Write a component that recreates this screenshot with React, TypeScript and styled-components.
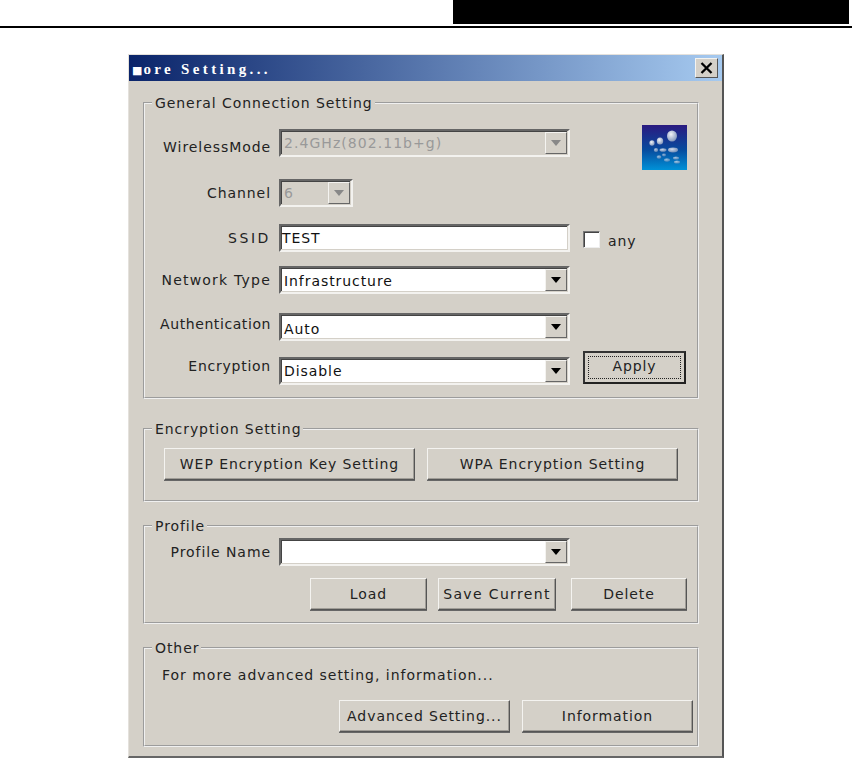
import React from 'react';
import styled, { createGlobalStyle } from 'styled-components';

const Global = createGlobalStyle`
  html, body { margin: 0; padding: 0; background: #fff; }
  body { width: 852px; height: 759px; overflow: hidden; font-family: "DejaVu Sans", Verdana, sans-serif; }
`;
const Header = styled.header`
  height: 28px; box-sizing: border-box; border-bottom: 2px solid #000;
  display: flex; justify-content: flex-end; padding-right: 3px;
`;
const BlackTab = styled.div`width: 396px; height: 24px; background: #000;`;
const Page = styled.main`display: flex; padding: 26px 0 0 128px;`;
const Win = styled.section`
  width: 596px; height: 704px; box-sizing: border-box; background: #d4d0c8;
  border-top: 1px solid #e4e1dc; border-right: 2px solid #555; border-bottom: 2px solid #666; border-left: 1px solid #e4e1dc;
  display: flex; flex-direction: column;
`;
const TitleBar = styled.div`
  height: 26px; flex: none; background: linear-gradient(90deg, #0a246a, #a6caf0);
  display: flex; align-items: center; justify-content: space-between; padding: 0 4px 0 3px;
`;
const Title = styled.div`
  color: #fff; font: bold 15px "Liberation Serif", serif; letter-spacing: 3.35px; white-space: pre; padding-top: 3px;
`;
const Block = styled.span`font: 11px "DejaVu Sans", sans-serif; letter-spacing: 1px;`;
const CloseBtn = styled.div`
  width: 23px; height: 20px; box-sizing: border-box; background: #d4d0c8;
  border: 1px solid; border-color: #f4f3f0 #555 #555 #f4f3f0;
  display: flex; align-items: center; justify-content: center;
`;
const Body = styled.div`padding: 12px 0 0 14px; display: flex; flex-direction: column;`;
const Group = styled.fieldset<{ $h: number; $mt?: number }>`
  margin: ${p => p.$mt ?? 0}px 0 0; padding: 0; min-width: 0; width: 556px; height: ${p => p.$h}px; box-sizing: border-box;
  border: 2px groove #f0f0f0; color: #111;
`;
const Legend = styled.legend`
  margin-left: 7px; padding: 2px 2px 0 3px; font-size: 14px; line-height: 17px; letter-spacing: 0.93px; color: #222;
`;
const Row = styled.div<{ $mt: number }>`display: flex; align-items: center; margin-top: ${p => p.$mt}px; position: relative;`;
const Label = styled.span<{ $up?: number; $down?: number; $ls?: number }>`
  width: 126px; flex: none; text-align: right; font-size: 14px; letter-spacing: ${p => p.$ls ?? 0.93}px; color: #222; white-space: nowrap;
  margin-right: 8px; padding-bottom: ${p => p.$up ?? 0}px; padding-top: ${p => p.$down ?? 0}px;
`;
const Field = styled.div<{ $w?: number; $dis?: boolean; $h?: number }>`
  width: ${p => p.$w ?? 291}px; height: ${p => p.$h ?? 28}px; box-sizing: border-box; flex: none;
  background: ${p => (p.$dis ? '#d4d0c8' : '#fff')};
  border: 2px solid; border-color: #666 #f3f2ef #f3f2ef #666;
  box-shadow: inset -1px -1px 0 #d4d0c8, inset 1px 1px 0 #444;
  display: flex; align-items: center; justify-content: space-between;
`;
const FieldText = styled.span<{ $dis?: boolean; $down?: number; $pl?: number }>`
  padding-left: ${p => p.$pl ?? 3}px; font-size: 14px; letter-spacing: ${p => (p.$dis ? 1.05 : 0.93)}px; color: ${p => (p.$dis ? '#999' : '#111')};
  padding-top: ${p => p.$down ?? 0}px; white-space: nowrap;
`;
const Arrow = styled.div<{ $dis?: boolean }>`
  width: 22px; height: 22px; margin-right: 1px; flex: none; box-sizing: border-box; background: #d4d0c8;
  border: 1px solid; border-color: #f4f3f0 #666 #666 #f4f3f0;
  display: flex; align-items: center; justify-content: center;
  &::after { content: ''; border: 5px solid transparent; border-top: 6px solid ${p => (p.$dis ? '#888' : '#000')}; border-bottom: 0; }
`;
const Check = styled.div`
  width: 17px; height: 17px; margin: 3px 0 0 13px; box-sizing: border-box; background: #fff;
  border: 1px solid; border-color: #777 #eee #eee #777; box-shadow: inset 1px 1px 0 #444;
`;
const CheckText = styled.span`margin-left: 8px; padding-top: 6px; font-size: 14px; letter-spacing: 0.93px; color: #222;`;
const Btn = styled.div<{ $w: number; $ml?: number; $ls?: number }>`
  width: ${p => p.$w}px; height: 32px; margin-left: ${p => p.$ml ?? 0}px; box-sizing: border-box; flex: none; background: #d4d0c8;
  border: 1px solid; border-color: #f4f3f0 #555 #555 #f4f3f0; box-shadow: 0 1px 0 #666, inset -1px -1px 0 #a09d97;
  display: flex; align-items: center; justify-content: center;
  font-size: 14px; letter-spacing: ${p => p.$ls ?? 0.93}px; color: #222; white-space: nowrap;
`;
const ApplyBtn = styled.div`
  width: 103px; height: 33px; margin: -8px 0 0 13px; flex: none; box-sizing: border-box; background: #d4d0c8;
  border: 2px solid; border-color: #333 #222 #222 #333; padding: 3px;
  display: flex;
`;
const Focus = styled.div`
  flex: 1; border: 1px dotted #222; display: flex; align-items: center; justify-content: center;
  font-size: 14px; letter-spacing: 0.93px; color: #222; padding-bottom: 2px;
`;
const Buttons = styled.div<{ $mt: number; $pl: number; $gap: number }>`
  display: flex; gap: ${p => p.$gap}px; margin-top: ${p => p.$mt}px; padding-left: ${p => p.$pl}px;
`;
const Note = styled.div`margin: 10px 0 0 17px; font-size: 14px; letter-spacing: 0.98px; color: #222; line-height: 17px;`;
const LogoWrap = styled.div`position: absolute; left: 497px; top: -4px; line-height: 0;`;

const Logo = () => (
  <svg width="45" height="45" viewBox="0 0 45 45">
    <defs>
      <linearGradient id="lg" x1="0" y1="0" x2="0" y2="1">
        <stop offset="0" stopColor="#2a1a80" /><stop offset="0.55" stopColor="#074b9e" /><stop offset="1" stopColor="#0092d8" />
      </linearGradient>
      <radialGradient id="bl" cx="0.4" cy="0.35" r="0.7">
        <stop offset="0" stopColor="#f2f4f8" /><stop offset="1" stopColor="#7f93b8" />
      </radialGradient>
      <filter id="sf"><feGaussianBlur stdDeviation="0.5" /></filter>
    </defs>
    <rect width="45" height="45" fill="url(#lg)" />
    <g fill="url(#bl)" filter="url(#sf)">
      <ellipse cx="30" cy="11" rx="5" ry="5.5" />
      <ellipse cx="18" cy="16" rx="3.2" ry="3.5" />
      <ellipse cx="10" cy="18" rx="2.6" ry="2.8" />
      <ellipse cx="31" cy="25" rx="5" ry="2.4" opacity="0.85" />
      <ellipse cx="21" cy="25" rx="3.5" ry="1.8" opacity="0.8" />
      <ellipse cx="14" cy="25" rx="2.2" ry="2" opacity="0.7" />
      <ellipse cx="17" cy="32" rx="2.4" ry="1.8" opacity="0.6" />
      <ellipse cx="25" cy="35" rx="3" ry="1.7" opacity="0.6" />
      <ellipse cx="22" cy="30" rx="2" ry="1.4" opacity="0.55" />
      <ellipse cx="34" cy="33" rx="3" ry="1.5" opacity="0.65" />
      <ellipse cx="35" cy="37" rx="3" ry="1.5" opacity="0.65" />
    </g>
  </svg>
);

export default function App() {
  return (
    <>
      <Global />
      <Header><BlackTab /></Header>
      <Page>
        <Win>
          <TitleBar>
            <Title><Block>■</Block>ore Setting...</Title>
            <CloseBtn>
              <svg width="13" height="12" viewBox="0 0 13 12"><path d="M1.5 1l10 10M11.5 1l-10 10" stroke="#000" strokeWidth="2.3" fill="none" /></svg>
            </CloseBtn>
          </TitleBar>
          <Body>
            <Group $h={306}>
              <Legend>General Connection Setting</Legend>
              <Row $mt={17}>
                <Label $down={8}>WirelessMode</Label>
                <Field $dis><FieldText $dis>2.4GHz(802.11b+g)</FieldText><Arrow $dis /></Field>
                <LogoWrap><Logo /></LogoWrap>
              </Row>
              <Row $mt={22}>
                <Label>Channel</Label>
                <Field $dis $w={74}><FieldText $dis>6</FieldText><Arrow $dis /></Field>
              </Row>
              <Row $mt={17}>
                <Label $ls={2.6}>SSID</Label>
                <Field><FieldText $pl={1}>TEST</FieldText></Field>
                <Check /><CheckText>any</CheckText>
              </Row>
              <Row $mt={14}>
                <Label $ls={1.2}>Network Type</Label>
                <Field><FieldText $down={2}>Infrastructure</FieldText><Arrow /></Field>
              </Row>
              <Row $mt={19}>
                <Label $up={6} $ls={0.58}>Authentication</Label>
                <Field><FieldText $down={4}>Auto</FieldText><Arrow /></Field>
              </Row>
              <Row $mt={16}>
                <Label $up={10} $ls={0.75}>Encryption</Label>
                <Field><FieldText>Disable</FieldText><Arrow /></Field>
                <ApplyBtn><Focus>Apply</Focus></ApplyBtn>
              </Row>
            </Group>
            <Group $h={83} $mt={20}>
              <Legend>Encryption Setting</Legend>
              <Buttons $mt={10} $pl={19} $gap={12}>
                <Btn $w={251}>WEP Encryption Key Setting</Btn>
                <Btn $w={251}>WPA Encryption Setting</Btn>
              </Buttons>
            </Group>
            <Group $h={108} $mt={14}>
              <Legend>Profile</Legend>
              <Row $mt={3}>
                <Label>Profile Name</Label>
                <Field><span /><Arrow /></Field>
              </Row>
              <Buttons $mt={12} $pl={165} $gap={11}>
                <Btn $w={117}>Load</Btn>
                <Btn $w={118} $ls={1.35}>Save Current</Btn>
                <Btn $w={116} $ml={4}>Delete</Btn>
              </Buttons>
            </Group>
            <Group $h={109} $mt={14}>
              <Legend>Other</Legend>
              <Note>For more advanced setting, information...</Note>
              <Buttons $mt={16} $pl={194} $gap={12}>
                <Btn $w={171}>Advanced Setting...</Btn>
                <Btn $w={171}>Information</Btn>
              </Buttons>
            </Group>
          </Body>
        </Win>
      </Page>
    </>
  );
}
